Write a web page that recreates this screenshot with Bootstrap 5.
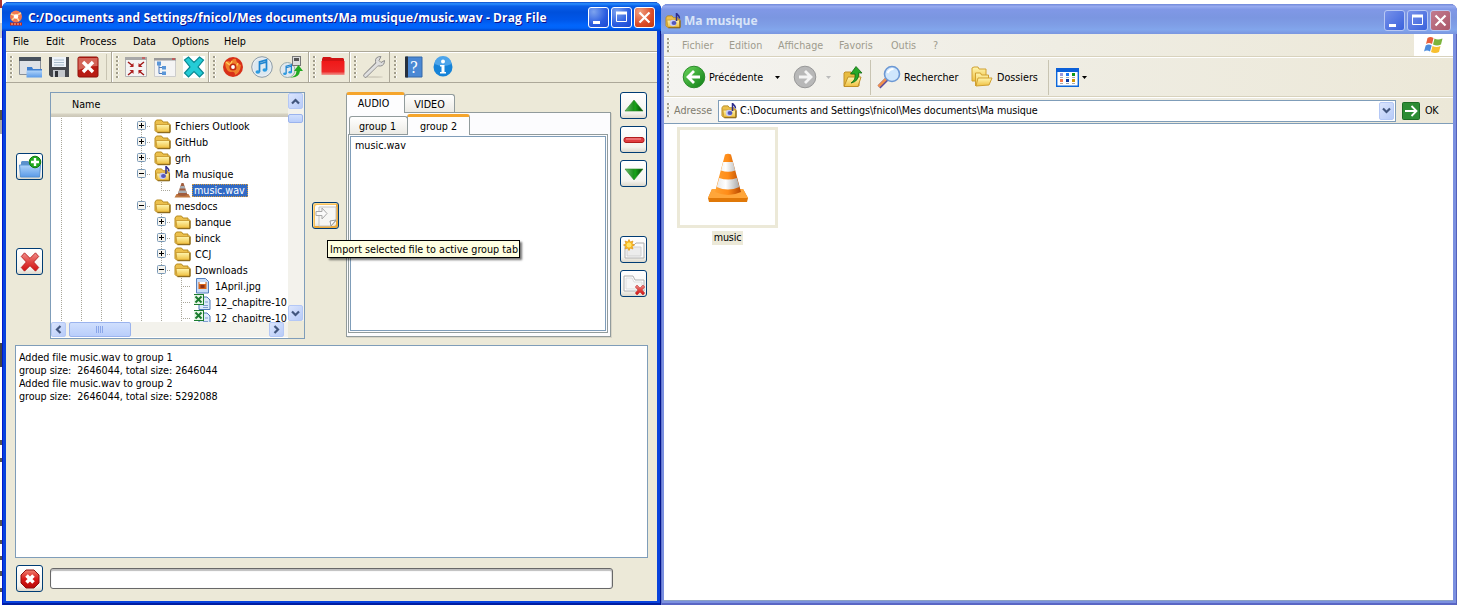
<!DOCTYPE html>
<html lang="en">
<head>
<meta charset="utf-8">
<meta name="viewport" content="width=device-width, initial-scale=1">
<title>Drag File</title>
<link href="https://cdn.jsdelivr.net/npm/bootstrap@5.3.0/dist/css/bootstrap.min.css" rel="stylesheet">
<style>
body{width:1457px;height:605px;overflow:hidden;background:#fff;color:#000;font:10.7px/16px "DejaVu Sans Condensed","DejaVu Sans",sans-serif;font-stretch:condensed;white-space:nowrap}
svg{display:block;flex:none;overflow:visible}
/* neighbouring windows peeking out at the edge */
.edge{width:2px;background:linear-gradient(#a33 0 8px,#f6f4ec 8px 23px,#ccc 23px 38px,#fff 38px 110px,#554 110px 120px,#aaa 120px 134px,#fff 134px 343px,#444 343px 367px,#fff 367px 440px,#555 440px 445px,#fff 445px 458px,#555 458px 462px,#fff 462px 520px,#555 520px 526px,#fff 526px 540px,#555 540px 544px,#fff 544px 556px,#555 556px 560px,#fff 560px 571px,#555 571px 576px,#fff 576px 588px,#555 588px 592px,#fff 592px)}
.win-a{width:659px;height:603px;margin-top:2px;padding:0 4px 4px;border-radius:7px 7px 0 0;background:#0842dc;box-shadow:inset 1px 0 #0019cf,inset -1px 0 #00138c,inset 0 -2px #001ea0}
.win-b{width:796px;height:601px;margin-top:4px;padding:0 4px 4px 3px;border-radius:7px 7px 0 0;background:#7b90e0;box-shadow:inset 1px 0 #6375cc,inset -1px 0 #5562bb,inset 0 -2px #5a66c4}
.cap{height:29px;border-radius:7px 7px 0 0}
.win-a .cap{margin:0 -4px;padding:2px 6px 0 7px;color:#fff;text-shadow:1px 1px #0f1089;background:linear-gradient(#0a49c8,#2b90ff 6%,#0a5fe8 14%,#0050dc 35%,#0056e8 60%,#0165fc 80%,#0164f8 90%,#0042c8)}
.win-b .cap{height:30px;margin:0 -4px 0 -3px;padding:3px 6px 0 4px;color:#d8e4f8;background:linear-gradient(#7088d8,#96aaf0 8%,#8098e6 18%,#7b96e1 45%,#7f9ee6 70%,#82a6ec 86%,#7a96e0)}
.cap-t{font:bold 12px/20px "Open Sans","Noto Sans",sans-serif}
.win-a .cap-t{letter-spacing:.125px;margin-left:5px}
.cb{width:21px;height:21px;border:1px solid #fff;border-radius:3px;background:radial-gradient(circle at 25% 20%,#7da3ee,#2a5ce0 60%,#1c49d0)}
.cb.x{background:radial-gradient(circle at 25% 20%,#f0a080,#dc4c28 60%,#c03810)}
.cbs{gap:2px}
.win-b .cb{border-color:#b8c8f4;background:linear-gradient(135deg,#7791ea,#3a62dc)}
.win-b .cb.x{background:linear-gradient(135deg,#c27b90,#ab5868)}
.face{background:#ece9d8}
.client{height:570px}
.menus{height:20px;padding-left:7px;line-height:21px}
.mi-1{width:33px}.mi-2{width:34px}.mi-3{width:53px}.mi-4{width:39px}.mi-5{width:52px}
.tools{height:32px;border-top:1px solid #aca899;border-bottom:1px solid #aca899;box-shadow:inset 0 1px #fff}
.tg{border-right:1px solid #aca899;box-shadow:inset 1px 0 #fff;padding-left:4px}
.grip{width:3px;height:23px;margin-right:2px;background:repeating-linear-gradient(transparent 0 2px,#ece9d8 2px 4px),linear-gradient(90deg,#a29e8c 2px,#fff 2px)}
.tc{width:29px}
.sq{width:27px;height:27px;border:1px solid #003c74;border-radius:3px;background:linear-gradient(#fff,#f4f3ee 80%,#dcd8cc);display:flex;align-items:center;justify-content:center}
.sq.hot{box-shadow:inset 1px 1px #fcd88c,inset -2px -2px #ecaa3c,inset 2px 2px #f6c05c}
.upper{height:262px;padding-top:9px}
.lc{width:44px;padding-left:10px;padding-top:61px;gap:68px}
.tree{width:255px;height:247px;border:1px solid #7f9db9;background:#fff}
.thead{height:24px;padding:1px 0 0 21px;line-height:22px;background:linear-gradient(#ebeadb 20px,#d6d2c2 21px,#cbc7b8 24px)}
.tbody{height:205px;overflow:hidden;padding-top:1px;letter-spacing:-.02px}
.tr{height:16px;display:flex;align-items:flex-start;line-height:18px}
.g,.ex,.el{width:20px;height:16px;flex:none;background:repeating-linear-gradient(#a9a79b 0 1px,transparent 1px 2px) 10px 0/1px 16px no-repeat}
.ex{background:repeating-linear-gradient(#a9a79b 0 1px,transparent 1px 2px) 10px 0/1px 16px no-repeat,repeating-linear-gradient(90deg,#a9a79b 0 1px,transparent 1px 2px) 16px 8px/5px 1px no-repeat}
.ex svg{margin:3px 0 0 6px}
.el{background:repeating-linear-gradient(#a9a79b 0 1px,transparent 1px 2px) 10px 0/1px 16px no-repeat,repeating-linear-gradient(90deg,#a9a79b 0 1px,transparent 1px 2px) 10px 8px/10px 1px no-repeat}
.el.last{background-size:1px 8px,10px 1px}
.tr>.ic{width:17px;height:16px;margin:0 4px 0 3px}
.seld{height:13px;line-height:13px;background:#316ac5;color:#fff;outline:1px dotted #d69a3a;outline-offset:-1px;padding:0 2px;margin:2px 0 0 -3px;width:56px}
.sb{background:#f3f2ec;width:16px}
.sbb{width:15px;height:16px;border-radius:2px;border:1px solid #b4c8f6;background:linear-gradient(135deg,#dbe5fd,#b7cbf8);display:flex;align-items:center;justify-content:center}
.thumb{border:1px solid #9ab3ee;border-radius:2px;background:linear-gradient(#d0dffd,#b9cefb)}
.imp{padding:110px 7px 0}
.tabs{width:265px}
.tab-x{border:1px solid #919b9c;border-bottom:0;border-radius:3px 3px 0 0;background:linear-gradient(#fff,#ecebe5);text-align:center}
.tab-x.on{border-top:3px solid #f5a52c;background:#fdfdfe;position:relative;z-index:1;margin-bottom:-1px}
.pane{border:1px solid #919b9c;background:#fcfcfe;box-shadow:1px 1px #d8d4c6;height:225px;padding:1px 2px 0 1px}
.pane-in{height:199px;border:1px solid #919b9c;padding:1px;background:#fcfcfe}
.lst{height:195px;border:1px solid #7f9db9;background:#fff;padding:1px 4px}
.rc{width:36px;padding-left:9px}
.log{margin-left:9px;width:633px;height:213px;border:1px solid #7f9db9;background:#fff;padding:5px 3px;line-height:13px;white-space:pre;letter-spacing:-.05px}
.prog{width:563px;height:21px;border:1px solid #686868;border-radius:3px;background:#fff;box-shadow:inset 0 2px 1px #bebebe,inset -1px 0 1px #ddd}
.tip{position:absolute;left:327px;top:240px;width:193px;height:18px;border:1px solid #000;background:#ffffe1;padding:0 2px;line-height:17px;z-index:5;box-shadow:2px 2px 2px rgba(0,0,0,.55)}
.b-menu,.b-tool,.b-addr{padding-left:3px;background:linear-gradient(90deg,#f4f3f0,#efede3 50%,#ece8d8)}
.b-menu{height:23px;color:#9e9b8d;border-bottom:1px solid #d8d2bd}
.b-tool{height:40px;border-bottom:1px solid #d8d2bd;border-top:1px solid #fff}
.b-addr{height:26px;border-top:1px solid #fff}
.b-menu>span,.b-tool>span{padding-top:1px}
.field{width:678px;height:22px;border:1px solid #7f9db9;background:#fff;padding:0 1px 0 2px;letter-spacing:-.07px}
.vsep{width:1px;height:35px;background:#c8c4b2}
.view{height:478px;background:#fff;border-top:1px solid #7f9db9;border-bottom:1px solid #8ba0c4;padding:3px 13px}
.thumb-b{width:101px;height:101px;border:3px solid #ece9d8}
.lab{background:#ece9d8;padding:0 2px;line-height:14px;height:14px;letter-spacing:-.2px}
</style>
</head>
<body class="d-flex align-items-start">
<svg width="0" height="0" class="position-absolute">
<defs>
<linearGradient id="gy" x2="0" y2="1"><stop stop-color="#fff6b0"/><stop offset="1" stop-color="#efc040"/></linearGradient>
<linearGradient id="gr" x2="0" y2="1"><stop stop-color="#f08070"/><stop offset=".5" stop-color="#d81818"/><stop offset="1" stop-color="#b80808"/></linearGradient>
<linearGradient id="gx" x2="0" y2="1"><stop stop-color="#f0908c"/><stop offset=".5" stop-color="#e04440"/><stop offset="1" stop-color="#d01010"/></linearGradient>
<linearGradient id="gb" x2="0" y2="1"><stop stop-color="#b0d4fa"/><stop offset="1" stop-color="#5a9ae8"/></linearGradient>
<linearGradient id="gg" x2="1" y2="1"><stop stop-color="#6cd65c"/><stop offset="1" stop-color="#0c7c14"/></linearGradient>
<linearGradient id="rf" x2="0" y2="1"><stop stop-color="#f01818"/><stop offset=".75" stop-color="#ee2828"/><stop offset="1" stop-color="#f09a90"/></linearGradient>
<linearGradient id="tri"><stop stop-color="#6fba6f"/><stop offset=".5" stop-color="#189018"/><stop offset=".55" stop-color="#18a818"/><stop offset="1" stop-color="#063c06"/></linearGradient>
<linearGradient id="cone"><stop stop-color="#ffa030"/><stop offset=".5" stop-color="#ff8c18"/><stop offset="1" stop-color="#b84800"/></linearGradient>
<linearGradient id="wh"><stop stop-color="#e8e8e8"/><stop offset=".4" stop-color="#fff"/><stop offset="1" stop-color="#a8a8a8"/></linearGradient>
<symbol id="folder" viewBox="0 0 16 16"><path d="M.5 12.500V4L2 2h5l1.500 2h5v2h2v8H2z" fill="#ecc04c" stroke="#b88c20"/><path d="M2.500 14L1.500 6.500H15V14z" fill="url(#gy)" stroke="#c89a30" stroke-width=".9"/><path d="M3 14.700H15.500V7" fill="none" stroke="#7d5c10"/></symbol>
<symbol id="mfolder" viewBox="0 0 16 16"><use href="#folder" y="1" width="16" height="15"/><path d="M11.500 8V0c0 2 3.500 2 3 5.500" fill="none" stroke="#2c2c8c" stroke-width="1.500"/><circle cx="8" cy="10" r="3.200" fill="#c8ccf4"/><ellipse cx="9" cy="10" rx="2.500" ry="1.900" fill="#5458bc"/></symbol>
<symbol id="plus" viewBox="0 0 9 9"><rect x=".5" y=".5" width="8" height="8" rx="1" fill="#f6f4ee" stroke="#7b9ab8"/><path d="M2 4.500h5M4.500 2v5" stroke="#000"/></symbol>
<symbol id="minus" viewBox="0 0 9 9"><rect x=".5" y=".5" width="8" height="8" rx="1" fill="#f6f4ee" stroke="#7b9ab8"/><path d="M2 4.500h5" stroke="#000"/></symbol>
<symbol id="vlc" viewBox="0 0 40 50"><path d="M4 36h31l5 9-1 4H1l-1-4z" fill="#e07808"/><path d="M4 36h31l5 9H0z" fill="#ffa63a"/><path d="M17 1.500Q20 0 23 1.500L33 39q-13 6-26 0z" fill="url(#cone)"/><path d="M15.200 9h9.700l2.300 8.500q-7 2.500-14.200 0zM11.200 25q9 3 17.700 0l2.500 9q-11.400 5-22.700 0z" fill="url(#wh)"/></symbol>
<symbol id="vlcs" viewBox="0 0 16 16"><path d="M2 12h12l2 3.500H0z" fill="#c07840"/><path d="M7 1h2l4 12q-5 2-10 0z" fill="#a05c3c"/><path d="M6 4h4l.8 2.500H5.200zM4.500 8.500h7l.8 2.500H3.700z" fill="#a8aeb4"/></symbol>
<symbol id="xls" viewBox="0 0 17 16"><path d="M5 3h8l3 3v9.500H5z" fill="#dce9fb" stroke="#4d78b8"/><path d="M11 8h3M9 11.500h5M9 13.500h5" stroke="#7fa0d0"/><rect x="-.5" y=".5" width="10" height="10" fill="#e8f6e8" stroke="#1c7c30"/><path d="M1.500 2.500l6 6M7.500 2.500l-6 6" stroke="#1c7c30" stroke-width="2"/></symbol>
<symbol id="note" viewBox="0 0 24 24"><path d="M9.500 17V7l7-2v10M9.500 9l7-2" fill="none" stroke="#1c84d0" stroke-width="1.700"/><ellipse cx="7.800" cy="17" rx="2.300" ry="1.800" fill="#2b9be0"/><ellipse cx="14.800" cy="15" rx="2.300" ry="1.800" fill="#2b9be0"/></symbol>
<symbol id="mn" viewBox="0 0 19 19"><path d="M4 14.500h7" stroke="#fff" stroke-width="3"/></symbol>
<symbol id="mx" viewBox="0 0 19 19"><path d="M4.500 4.500h10v9h-10z" fill="none" stroke="#fff"/><path d="M4 5h11" stroke="#fff" stroke-width="3"/></symbol>
<symbol id="cl" viewBox="0 0 19 19"><path d="M4.500 4.500l10 10M14.500 4.500l-10 10" stroke="#fff" stroke-width="2.200"/></symbol>
<symbol id="xr" viewBox="0 0 24 24"><path d="M2.500 6l3.500-4 6 6 6-6 3.500 4-5.500 6 5.500 6-3.500 4-6-6-6 6-3.500-4L8 12z" fill="url(#gx)" stroke="#b82020"/></symbol>
<symbol id="ch" viewBox="0 0 9 9"><path d="M1 6.500L4.500 3 8 6.500" fill="none" stroke="#42567e" stroke-width="2.200"/></symbol>
</defs>
</svg>

<div class="edge align-self-stretch flex-shrink-0"></div>

<main class="win-a flex-shrink-0">
  <div class="cap d-flex align-items-center">
    <svg width="14" height="16" viewBox="0 0 14 16"><circle cx="7" cy="6.500" r="6" fill="#f07850"/><path d="M2 4l5 2 5-3M3 10l4-4 3 5" stroke="#ffd898" stroke-width="1.500" fill="none"/><circle cx="7" cy="6.500" r="2.200" fill="#fff"/><path d="M1 12.500h12v3H1z" fill="#c62818"/><path d="M2 14h10" stroke="#ffc0a0" stroke-dasharray="2 1"/></svg>
    <span class="cap-t">C:/Documents and Settings/fnicol/Mes documents/Ma musique/music.wav - Drag File</span>
    <div class="ms-auto d-flex cbs">
      <div class="cb"><svg width="19" height="19"><use href="#mn"/></svg></div>
      <div class="cb"><svg width="19" height="19"><use href="#mx"/></svg></div>
      <div class="cb x"><svg width="19" height="19"><use href="#cl"/></svg></div>
    </div>
  </div>
  <div class="face client">
    <nav class="menus d-flex"><span class="mi-1">File</span><span class="mi-2">Edit</span><span class="mi-3">Process</span><span class="mi-4">Data</span><span class="mi-5">Options</span><span>Help</span></nav>
    <div class="tools d-flex">
      <div class="tg d-flex align-items-center" style="width:106px"><i class="grip"></i>
        <div class="tc"><svg class="mx-auto" width="24" height="24"><path d="M1.500 2.500h21v17h-21z" fill="#dfe2e6" stroke="#8a9098"/><path d="M1 2h22v4H1z" fill="#48525e"/><path d="M9 22V12h5l1 2h9v8z" fill="#3f7fd0"/><path d="M8.500 22.500v-7h15.500v7z" fill="url(#gb)"/></svg></div>
        <div class="tc"><svg class="mx-auto" width="24" height="24"><path d="M2 2h20v20H4l-2-2z" fill="#45484d"/><path d="M5 2h14v10H5z" fill="#eef4fa"/><path d="M7 5h10M7 7.500h10M7 10h10" stroke="#a8bccc"/><path d="M6 15h12v7H6z" fill="#c4c8cc"/><path d="M8 16h3v6H8z" fill="#303338"/></svg></div>
        <div class="tc"><svg class="mx-auto" width="24" height="24"><rect x="2" y="2" width="20" height="20" rx="1.500" fill="#b81c14" stroke="#8c1008"/><path d="M2.500 3h19v8q-9 0-19 4z" fill="#d46458"/><path d="M7 7l10 10M17 7L7 17" stroke="#fff" stroke-width="3.400"/></svg></div>
        <div class="vsep ms-1" style="height:26px"></div>
      </div>
      <div class="tg d-flex align-items-center" style="width:97px"><i class="grip"></i>
        <div class="tc"><svg class="mx-auto" width="24" height="24"><path d="M1.500 2.500h21v19h-21z" fill="#f4f4f4" stroke="#b4b4b4"/><path d="M1 2h22v3H1z" fill="#a8a8a8"/><path d="M18 3h3" stroke="#d22"/><path d="M4 7l5 4M20 7l-5 4M4 20l5-4M20 20l-5-4" stroke="#a01818" stroke-width="1.500"/><path d="M9.500 8v4h-4zM14.500 8v4h4zM9.500 19v-4h-4zM14.500 19v-4h4z" fill="#b02020"/></svg></div>
        <div class="tc"><svg class="mx-auto" width="24" height="24"><path d="M1.500 3.500h21v18h-21z" fill="#f4f4f4" stroke="#ccc"/><path d="M1 3h22v2.500H1z" fill="#999"/><path d="M19 4h3" stroke="#d22"/><path d="M6 9v9.500h5M6 12.500h5" fill="none" stroke="#4a78b8"/><path d="M4 6.500h4v4H4zM9 11h4v3.500H9zM9 16.500h4V20H9z" fill="#5b97d8"/></svg></div>
        <div class="tc"><svg class="mx-auto" width="24" height="24"><path d="M1 1h22v22H1z" fill="#fff"/><path d="M2.500 5l4-3 5.500 5.500L17.500 2l4 3-5.500 7 5.500 6-4 4-5.500-5.500L6.500 22l-4-4L8 12z" fill="#24ccd6" stroke="#0a8892" stroke-width="1.200"/></svg></div>
      </div>
      <div class="tg d-flex align-items-center" style="width:100px"><i class="grip"></i>
        <div class="tc"><svg class="mx-auto" width="24" height="24"><circle cx="12" cy="12" r="10" fill="#d83018"/><path d="M4 8q3-4 6 0 1-5 5-4 0 4 5 6-1 8-6 10 0-4-4-3-5 0-6-9z" fill="#f0802c"/><path d="M5 7l4 3 2-4M17 8l-3 6" stroke="#ffc858" stroke-width="1.500" fill="none"/><circle cx="12" cy="12" r="3.600" fill="#c42810"/><circle cx="12" cy="12" r="1.900" fill="#fff"/></svg></div>
        <div class="tc"><svg class="mx-auto" width="24" height="24"><circle cx="12" cy="12" r="10.300" fill="#e8eef2" stroke="#8c9ca8"/><circle cx="12" cy="12" r="8.500" fill="#dce8f0"/><use href="#note"/></svg></div>
        <div class="tc"><svg class="mx-auto" width="24" height="24"><circle cx="8.500" cy="15" r="7.500" fill="#e0e8ee" stroke="#9aa"/><use href="#note" x="0" y="6" width="18" height="18"/><rect x="13.500" y="1.500" width="8" height="9" fill="#ddd" stroke="#777"/><path d="M15 3h5v3h-5z" fill="#555"/><path d="M9 22q8 1 8.500-6H15l4.500-6L24 16h-3q-1 8-12 6" fill="#22aa22"/></svg></div>
      </div>
      <div class="tg d-flex align-items-center" style="width:41px"><i class="grip"></i>
        <div class="tc"><svg class="mx-auto" width="24" height="24"><path d="M1 17V4l1-2h7l2 1h11l1 1v13z" fill="#d01414"/><path d="M.5 20V6h23v14z" fill="url(#rf)"/></svg></div>
      </div>
      <div class="tg d-flex align-items-center" style="width:40px"><i class="grip"></i>
        <div class="tc"><svg class="mx-auto" width="24" height="24"><ellipse cx="12" cy="22" rx="9" ry="1" fill="#d4d0c0"/><path d="M3.500 20.500L15 9" stroke="#8c8c8c" stroke-width="4.500" stroke-linecap="round"/><path d="M19 1.500q-6 0-5.500 5t5 4.500q4-.5 4-5.500l-3.500 2-2-2z" fill="#ddd" stroke="#8c8c8c"/><path d="M3.500 20.500L16 8.500" stroke="#e0e0e0" stroke-width="2.800" stroke-linecap="round"/></svg></div>
      </div>
      <div class="d-flex align-items-center" style="padding-left:4px"><i class="grip"></i>
        <div class="tc"><svg class="mx-auto" width="24" height="24"><path d="M4 2h16v20H4z" fill="#4a88d4" stroke="#3468a8"/><path d="M3 1.500h3v21H3z" fill="#26303e"/><text x="8" y="18" font-family="DejaVu Serif" font-size="16" fill="#fff">?</text></svg></div>
        <div class="tc"><svg class="mx-auto" width="24" height="24"><circle cx="12" cy="12" r="9.500" fill="#1583d8"/><path d="M3.500 9a8.500 8 0 0 1 17 0q-8 4-17 0" fill="#4ca4ea"/><circle cx="12" cy="6.500" r="2" fill="#fff"/><path d="M9 10h4.500v7H15v1.500H9V17h1.500v-5.500H9z" fill="#fff"/></svg></div>
      </div>
    </div>
    <section class="upper d-flex">
      <div class="lc d-flex flex-column">
        <div class="sq"><svg width="24" height="24"><path d="M3 20V7l1-1h6l2 2h8v12z" fill="#5a90cc"/><path d="M1.500 10h21l-1 12h-19z" fill="url(#gb)" stroke="#5a94d4"/><circle cx="17" cy="7" r="5.800" fill="#1da81d" stroke="#127812"/><path d="M13 7h8M17 3v8" stroke="#fff" stroke-width="2.400"/></svg></div>
        <div class="sq"><svg width="22" height="22"><use href="#xr"/></svg></div>
      </div>
      <div class="tree d-flex">
        <div class="flex-grow-1 overflow-hidden">
          <div class="thead">Name</div>
          <div class="tbody">
            <div class="tr"><i class="g"></i><i class="g"></i><i class="g"></i><i class="g"></i><i class="ex"><svg width="9" height="9"><use href="#plus"/></svg></i><svg class="ic"><use href="#folder"/></svg>Fchiers Outlook</div>
            <div class="tr"><i class="g"></i><i class="g"></i><i class="g"></i><i class="g"></i><i class="ex"><svg width="9" height="9"><use href="#plus"/></svg></i><svg class="ic"><use href="#folder"/></svg>GitHub</div>
            <div class="tr"><i class="g"></i><i class="g"></i><i class="g"></i><i class="g"></i><i class="ex"><svg width="9" height="9"><use href="#plus"/></svg></i><svg class="ic"><use href="#folder"/></svg>grh</div>
            <div class="tr"><i class="g"></i><i class="g"></i><i class="g"></i><i class="g"></i><i class="ex"><svg width="9" height="9"><use href="#minus"/></svg></i><svg class="ic"><use href="#mfolder"/></svg>Ma musique</div>
            <div class="tr"><i class="g"></i><i class="g"></i><i class="g"></i><i class="g"></i><i class="g"></i><i class="el last"></i><svg class="ic"><use href="#vlcs"/></svg><span class="seld">music.wav</span></div>
            <div class="tr"><i class="g"></i><i class="g"></i><i class="g"></i><i class="g"></i><i class="ex"><svg width="9" height="9"><use href="#minus"/></svg></i><svg class="ic"><use href="#folder"/></svg>mesdocs</div>
            <div class="tr"><i class="g"></i><i class="g"></i><i class="g"></i><i class="g"></i><i class="g"></i><i class="ex"><svg width="9" height="9"><use href="#plus"/></svg></i><svg class="ic"><use href="#folder"/></svg>banque</div>
            <div class="tr"><i class="g"></i><i class="g"></i><i class="g"></i><i class="g"></i><i class="g"></i><i class="ex"><svg width="9" height="9"><use href="#plus"/></svg></i><svg class="ic"><use href="#folder"/></svg>binck</div>
            <div class="tr"><i class="g"></i><i class="g"></i><i class="g"></i><i class="g"></i><i class="g"></i><i class="ex"><svg width="9" height="9"><use href="#plus"/></svg></i><svg class="ic"><use href="#folder"/></svg>CCJ</div>
            <div class="tr"><i class="g"></i><i class="g"></i><i class="g"></i><i class="g"></i><i class="g"></i><i class="ex"><svg width="9" height="9"><use href="#minus"/></svg></i><svg class="ic"><use href="#folder"/></svg>Downloads</div>
            <div class="tr"><i class="g"></i><i class="g"></i><i class="g"></i><i class="g"></i><i class="g"></i><i class="g"></i><i class="el"></i><svg class="ic" viewBox="0 0 16 16"><path d="M2 .5h9l3 3V15H2z" fill="#c8dcf8" stroke="#5580bc"/><path d="M4 4h8v7H4z" fill="#d86418"/><path d="M5 4h6v2H5z" fill="#fff"/><path d="M6 7h4v3H6z" fill="#8c3018"/></svg>1April.jpg</div>
            <div class="tr"><i class="g"></i><i class="g"></i><i class="g"></i><i class="g"></i><i class="g"></i><i class="g"></i><i class="el"></i><svg class="ic"><use href="#xls"/></svg>12_chapitre-10</div>
            <div class="tr"><i class="g"></i><i class="g"></i><i class="g"></i><i class="g"></i><i class="g"></i><i class="g"></i><i class="el"></i><svg class="ic"><use href="#xls"/></svg>12_chapitre-10</div>
          </div>
          <div class="sb w-100 d-flex" style="height:15px">
            <div class="sbb h-100"><svg width="9" height="9" viewBox="0 0 9 9"><use href="#ch" transform="rotate(-90 4.500 4.500)"/></svg></div>
            <div class="thumb d-flex align-items-center justify-content-center" style="width:62px;margin-left:3px"><svg width="9" height="7"><path d="M.5 0v7M2.500 0v7M4.500 0v7M6.500 0v7" stroke="#8aa6e8"/></svg></div>
            <div class="sbb h-100 ms-auto me-1"><svg width="9" height="9" viewBox="0 0 9 9"><use href="#ch" transform="rotate(90 4.500 4.500)"/></svg></div>
          </div>
        </div>
        <div class="sb flex-shrink-0 d-flex flex-column">
          <div class="sbb"><svg width="9" height="9"><use href="#ch"/></svg></div>
          <div class="thumb" style="height:9px;width:15px;margin-top:5px"></div>
          <div class="sbb mt-auto"><svg width="9" height="9" viewBox="0 0 9 9"><use href="#ch" transform="rotate(180 4.500 4.500)"/></svg></div>
          <div class="face" style="height:17px"></div>
        </div>
      </div>
      <div class="imp"><div class="sq hot"><svg width="24" height="24"><path d="M5 3h17v14l-5 5H5z" fill="#f6f6f4" stroke="#c4c4c4"/><path d="M22 16l-5 6-1-5z" fill="#fff" stroke="#999"/><path d="M2 7.500h6V4l5 5.500L8 15v-3.500H2z" fill="#fafafa" stroke="#a8a8a8"/></svg></div></div>
      <div class="tabs">
        <div class="d-flex align-items-end" style="height:20px">
          <div class="tab-x on" style="width:59px;height:21px;line-height:17px;padding-right:4px">AUDIO</div>
          <div class="tab-x" style="width:51px;height:18px;line-height:19px;margin-left:-1px">VIDEO</div>
        </div>
        <div class="pane">
          <div class="d-flex align-items-end" style="height:20px">
            <div class="tab-x" style="width:59px;height:18px;line-height:19px;margin-left:1px;padding-right:2px">group 1</div>
            <div class="tab-x on" style="width:63px;height:21px;line-height:19px;margin-left:-1px">group 2</div>
          </div>
          <div class="pane-in"><div class="lst">music.wav</div></div>
        </div>
      </div>
      <div class="rc d-flex flex-column">
        <div class="sq"><svg width="24" height="24"><path d="M12 6l9 11H3z" fill="url(#tri)" stroke="#2a8a2a" stroke-width=".6"/></svg></div>
        <div class="sq" style="margin-top:7px"><svg width="24" height="24"><rect x="2" y="9.500" width="20" height="5" rx="2" fill="#e03c40" stroke="#b01c1c"/><path d="M4 11h15" stroke="#f8a0a0"/></svg></div>
        <div class="sq" style="margin-top:7px"><svg width="24" height="24"><path d="M12 18l9-11H3z" fill="url(#tri)" stroke="#2a8a2a" stroke-width=".6"/></svg></div>
        <div class="sq" style="margin-top:49px"><svg width="24" height="24"><path d="M3 20V7h9l2-2h8v15z" fill="#fbfbfb" stroke="#b0b0b0"/><path d="M5 18V9h14v9z" fill="#ececec" stroke="#d0d0d0"/><path d="M7 1.500l1.300 2.500 2.700-1-1 2.700L12.500 7 10 8.300l1 2.700-2.700-1L7 12.500 5.700 10 3 11l1-2.700L1.500 7 4 5.700 3 3l2.700 1z" fill="#fbb81c" stroke="#e09820" stroke-width=".7"/><circle cx="7" cy="7" r="2.500" fill="#ffe468"/></svg></div>
        <div class="sq" style="margin-top:7px"><svg width="24" height="24"><path d="M2 19V4h9l2 4h9v11z" fill="#fff" stroke="#b0b0b0"/><path d="M4 17V6h6l2 4h8v7z" fill="#f6f6f6" stroke="#ddd"/><use href="#xr" x="12" y="12" width="12" height="12"/></svg></div>
      </div>
    </section>
    <div class="log">Added file music.wav to group 1
group size:  2646044, total size: 2646044
Added file music.wav to group 2
group size:  2646044, total size: 5292088</div>
    <div class="d-flex align-items-center" style="padding:7px 0 0 10px">
      <div class="sq"><svg width="24" height="24"><path d="M8 3h8l5 5v8l-5 5H8l-5-5V8z" fill="url(#gr)" stroke="#901010"/><path d="M8.500 8.500l7 7M15.500 8.500l-7 7" stroke="#fff" stroke-width="3.600"/></svg></div>
      <div class="prog" style="margin-left:7px"></div>
    </div>
  </div>
</main>

<div class="tip">Import selected file to active group tab</div>

<aside class="win-b flex-shrink-0">
  <div class="cap d-flex align-items-center">
    <svg width="16" height="16"><use href="#mfolder"/></svg><span class="cap-t" style="margin-left:3px">Ma musique</span>
    <div class="ms-auto d-flex cbs">
      <div class="cb"><svg width="19" height="19"><use href="#mn"/></svg></div>
      <div class="cb"><svg width="19" height="19"><use href="#mx"/></svg></div>
      <div class="cb x"><svg width="19" height="19"><use href="#cl"/></svg></div>
    </div>
  </div>
  <nav class="b-menu d-flex align-items-center">
    <i class="grip" style="height:15px;margin-right:12px"></i><span style="width:47px">Fichier</span><span style="width:49px">Edition</span><span style="width:61px">Affichage</span><span style="width:52px">Favoris</span><span style="width:42px">Outis</span><span>?</span>
    <div class="ms-auto bg-white d-flex align-items-center justify-content-center" style="width:39px;height:22px"><svg width="20" height="18" viewBox="0 0 20 18"><path d="M3.500 2q3-2 6 0L8 8q-3-2-6 0z" fill="#e8603c"/><path d="M10.500 2.500q3 2 8 0l-1.500 6q-4 2-8 0z" fill="#7cb43c"/><path d="M1.700 9.500q3-2 6 0L6 15.500q-3-2-6 0z" fill="#4c8cdc"/><path d="M8.500 10q4 2 8 0l-1.500 6q-4 2-8 0z" fill="#f8c030"/></svg></div>
  </nav>
  <div class="b-tool d-flex align-items-center">
    <i class="grip" style="height:31px;margin-right:12px"></i>
    <svg width="24" height="24"><circle cx="12" cy="12" r="10.800" fill="url(#gg)" stroke="#2c8c2c"/><path d="M18 12H7M12 6l-6 6 6 6" fill="none" stroke="#fff" stroke-width="2.800"/></svg>
    <span style="margin-left:3px;width:66px">Précédente</span>
    <svg width="5" height="3"><path d="M0 0h5L2.500 3z"/></svg>
    <svg width="24" height="24" style="margin-left:13px"><circle cx="12" cy="12" r="10.800" fill="#b8b8b8" stroke="#989898"/><path d="M6 12h11M12 6l6 6-6 6" fill="none" stroke="#f4f4f4" stroke-width="2.800"/></svg>
    <svg width="5" height="3" style="margin-left:9px"><path d="M0 0h5L2.500 3z" fill="#bbb"/></svg>
    <svg width="22" height="24" style="margin-left:11px"><path d="M2 21V8l1-1h6l1 2h7v12z" fill="#e8bc40" stroke="#c09028"/><path d="M2 21.500L6 12h13l-3 9.500z" fill="url(#gy)" stroke="#c09028"/><path d="M9 18q5-3 4-9H8.500L14 1.500 20 8h-3.500q1 8-7.500 10" fill="#28a828" stroke="#106810" stroke-width=".8"/></svg>
    <div class="vsep" style="margin-left:6px"></div>
    <svg width="24" height="24" style="margin-left:6px"><path d="M2 22l8-8" stroke="#5c4c9c" stroke-width="4"/><path d="M1.500 21.500l8-8" stroke="#f0904c" stroke-width="2.500"/><circle cx="15" cy="9" r="7.500" fill="#cfe6fc" stroke="#6c98d4" stroke-width="1.600"/><path d="M10.500 8q2-4 6-4" stroke="#fff" stroke-width="2" fill="none"/></svg>
    <span style="margin-left:3px;width:66px">Rechercher</span>
    <svg width="24" height="24"><path d="M2 16V3l2-1h4l1 2h7v12z" fill="url(#gy)" stroke="#d0a030"/><path d="M5.500 21V8h5l1 2h7v5" fill="url(#gy)" stroke="#d0a030"/><path d="M6 21l2-8h14l-3 7z" fill="url(#gy)" stroke="#d0a030"/></svg>
    <span style="margin-left:3px;width:51px">Dossiers</span>
    <div class="vsep"></div>
    <svg width="23" height="19" style="margin-left:7px"><path d="M.7.700h21.600v17.600H.7z" fill="#fff" stroke="#0c68dc" stroke-width="1.400"/><path d="M0 0h23v4H0z" fill="#0c60d8"/><path d="M4 5h3v3H4z" fill="#9c98dc"/><path d="M10 5h3v3h-3z" fill="#2078f0"/><path d="M16 5h3v3h-3z" fill="#109818"/><path d="M4 11h3v3H4z" fill="#f87850"/><path d="M10 11h3v3h-3z" fill="#0c38a0"/><path d="M16 11h3v3h-3z" fill="#d09808"/><path d="M4 9.500h3M10 9.500h3M16 9.500h3M4 15.500h3M10 15.500h3M16 15.500h3" stroke="#aaa"/></svg>
    <svg width="5" height="3" style="margin-left:3px"><path d="M0 0h5L2.500 3z"/></svg>
  </div>
  <div class="b-addr d-flex align-items-center">
    <i class="grip" style="height:15px;margin-right:4px"></i><span style="width:44px;color:#7f7c6e">Adresse</span>
    <div class="field d-flex align-items-center"><svg width="16" height="16"><use href="#mfolder"/></svg><span style="margin-left:3px">C:\Documents and Settings\fnicol\Mes documents\Ma musique</span>
      <div class="sbb ms-auto" style="height:18px"><svg width="9" height="9" viewBox="0 0 9 9"><use href="#ch" transform="rotate(180 4.500 4.500)"/></svg></div></div>
    <svg width="18" height="18" style="margin-left:6px"><rect x=".5" y=".5" width="17" height="17" rx="1" fill="#2c8c34" stroke="#1c6c24"/><path d="M3 9h11M9.500 4l5 5-5 5" fill="none" stroke="#fff" stroke-width="1.800"/></svg>
    <span style="margin-left:5px;letter-spacing:-.4px">OK</span>
  </div>
  <div class="view">
    <div class="d-flex flex-column align-items-center" style="width:101px">
      <div class="thumb-b d-flex align-items-center justify-content-center"><svg width="40" height="50"><use href="#vlc"/></svg></div>
      <div class="lab" style="margin-top:3px">music</div>
    </div>
  </div>
</aside>
<script src="https://cdn.jsdelivr.net/npm/bootstrap@5.3.0/dist/js/bootstrap.bundle.min.js"></script>
</body>
</html>
